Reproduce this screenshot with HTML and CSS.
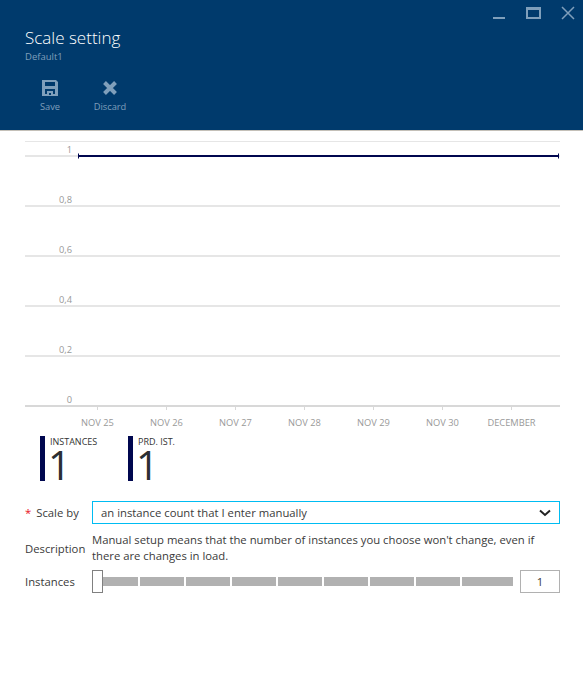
FILE: index.html
```html
<!DOCTYPE html>
<html lang="en">
<head>
    <meta charset="UTF-8">
    <meta name="viewport" content="width=device-width, initial-scale=1.0">
    <title>Scale setting</title>
    <link rel="stylesheet" href="styles.css">
</head>
<body>
    <header class="blade-header">
        <div class="window-buttons">
            <svg width="14" height="14" viewBox="0 0 14 14"><rect x="1" y="11" width="12" height="2" fill="#7f9fbb"/></svg>
            <svg width="17" height="14" viewBox="0 0 17 14"><path d="M1 1h15v12H1z M3 4v7h11V4z" fill="#7f9fbb" fill-rule="evenodd"/></svg>
            <svg width="14" height="14" viewBox="0 0 14 14"><path d="M1 1l12 12M13 1L1 13" stroke="#7f9fbb" stroke-width="1.5" fill="none"/></svg>
        </div>
        <h1>Scale setting</h1>
        <div class="subtitle">Default1</div>
        <div class="commands">
            <div class="command">
                <svg width="18" height="18" viewBox="0 0 18 18"><path d="M1 1h14l2 2v14H1z M4 3v4h10V3z M4 10v5h2v-3h6v3h2v-5z M8 14h2v2H8z" fill="#7f9fbb" fill-rule="evenodd"/></svg>
                <span>Save</span>
            </div>
            <div class="command">
                <svg width="18" height="18" viewBox="0 0 18 18"><path d="M3.5 3.5l11 11M14.5 3.5l-11 11" stroke="#7f9fbb" stroke-width="4" fill="none"/></svg>
                <span>Discard</span>
            </div>
        </div>
    </header>

    <svg class="chart" width="583" height="300" viewBox="0 131 583 300">
        <g stroke="#e6e6e6" stroke-width="2">
            <line x1="25" y1="141.5" x2="560" y2="141.5" stroke-width="1"/>
            <line x1="25" y1="156" x2="560" y2="156"/>
            <line x1="25" y1="206" x2="560" y2="206"/>
            <line x1="25" y1="256" x2="560" y2="256"/>
            <line x1="25" y1="306" x2="560" y2="306"/>
            <line x1="25" y1="356" x2="560" y2="356"/>
            <line x1="25" y1="406" x2="560" y2="406" stroke="#d8d8d8"/>
        </g>
        <g stroke="#d8d8d8">
            <line x1="97.5" y1="406" x2="97.5" y2="410"/>
            <line x1="166.5" y1="406" x2="166.5" y2="410"/>
            <line x1="235.5" y1="406" x2="235.5" y2="410"/>
            <line x1="304.5" y1="406" x2="304.5" y2="410"/>
            <line x1="373.5" y1="406" x2="373.5" y2="410"/>
            <line x1="442.5" y1="406" x2="442.5" y2="410"/>
            <line x1="511.5" y1="406" x2="511.5" y2="410"/>
        </g>
        <g class="axis-y" text-anchor="end">
            <text x="72" y="153">1</text>
            <text x="72" y="203">0,8</text>
            <text x="72" y="253">0,6</text>
            <text x="72" y="303">0,4</text>
            <text x="72" y="353">0,2</text>
            <text x="72" y="403">0</text>
        </g>
        <g class="axis-x" text-anchor="middle">
            <text x="97.5" y="426">NOV 25</text>
            <text x="166.5" y="426">NOV 26</text>
            <text x="235.5" y="426">NOV 27</text>
            <text x="304.5" y="426">NOV 28</text>
            <text x="373.5" y="426">NOV 29</text>
            <text x="442.5" y="426">NOV 30</text>
            <text x="511.5" y="426">DECEMBER</text>
        </g>
        <path d="M78.5 153.5v5M558.5 153.5v5" stroke="#00074f"/>
        <line x1="78" y1="156" x2="559" y2="156" stroke="#00074f" stroke-width="2"/>
    </svg>

    <div class="stats">
        <div class="stat">
            <div class="stat-label">INSTANCES</div>
            <div class="stat-value">1</div>
        </div>
        <div class="stat">
            <div class="stat-label">PRD. IST.</div>
            <div class="stat-value">1</div>
        </div>
    </div>

    <div class="form">
        <div class="form-row row-scale">
            <div class="form-label"><span class="required">*</span>Scale by</div>
            <div class="select">
                <span>an instance count that I enter manually</span>
                <svg width="12" height="8" viewBox="0 0 12 8"><path d="M1 1.5l5 4.5 5-4.5" stroke="#222" stroke-width="2" fill="none"/></svg>
            </div>
        </div>
        <div class="form-row row-description">
            <div class="form-label">Description</div>
            <p>Manual setup means that the number of instances you choose won't change, even if there are changes in load.</p>
        </div>
        <div class="form-row row-instances">
            <div class="form-label">Instances</div>
            <div class="slider">
                <div class="slider-thumb"></div>
                <div class="segment first"></div>
                <div class="segment"></div>
                <div class="segment"></div>
                <div class="segment"></div>
                <div class="segment"></div>
                <div class="segment"></div>
                <div class="segment"></div>
                <div class="segment"></div>
                <div class="segment last"></div>
            </div>
            <div class="number-box">1</div>
        </div>
    </div>
</body>
</html>
```

FILE: styles.css
```css
/* General Page Styling */
body {
    font-family: 'Open Sans', 'Noto Sans', sans-serif;
    margin: 0;
    padding: 0;
    background: #ffffff;
    color: #3a3a3a;
}

/* Header */
.blade-header {
    background: #003a6c;
    height: 130px;
    border-bottom: 1px solid #c4c0b8;
    padding: 0 0 0 25px;
    color: #ffffff;
    overflow: hidden;
}

.window-buttons {
    display: flex;
    justify-content: flex-end;
    gap: 19px;
    padding: 6px 8px 0 0;
    height: 20px;
}

h1 {
    font-size: 17px;
    font-weight: 300;
    line-height: 24px;
    margin: 0;
}

.subtitle {
    font-size: 9.5px;
    line-height: 14px;
    color: #7f9fbb;
}

.commands {
    display: flex;
    margin-top: 15px;
}

.command {
    width: 50px;
    display: flex;
    flex-direction: column;
    align-items: center;
    font-size: 9.3px;
    color: #7f9fbb;
    margin-right: 10px;
}

.command span {
    line-height: 14px;
    margin-top: 3px;
}

/* Chart */
.chart {
    display: block;
}

.chart text {
    font-family: 'Open Sans', 'Noto Sans', sans-serif;
    font-size: 9.3px;
    fill: #999999;
}

/* Stats */
.stats {
    display: flex;
    padding: 5px 0 0 40px;
}

.stat {
    width: 78px;
    height: 45px;
    border-left: 5px solid #00074f;
    padding-left: 5px;
}

.stat-label {
    font-size: 9px;
    line-height: 12px;
    color: #333333;
}

.stat-value {
    font-size: 40px;
    font-weight: 500;
    line-height: 33px;
    margin-left: -2px;
    color: #2b2f33;
}

/* Form */
.form {
    padding: 20px 23px 0 25px;
    font-size: 11.3px;
}

.form-row {
    display: flex;
}

.form-label {
    width: 67px;
    flex: none;
    white-space: nowrap;
}

.required {
    color: #e81123;
    margin-right: 5px;
}

.row-scale {
    height: 23px;
    align-items: center;
}

.select {
    flex: 1;
    height: 23px;
    box-sizing: border-box;
    border: 1px solid #00bcf2;
    padding: 0 8px;
    display: flex;
    align-items: center;
    justify-content: space-between;
}

.row-description {
    margin-top: 8px;
    align-items: center;
}

.row-description p {
    margin: 0;
    line-height: 16px;
}

.row-instances {
    margin-top: 6px;
    align-items: center;
}

.slider {
    position: relative;
    width: 421px;
    height: 9px;
    display: flex;
    gap: 2px;
}

.segment {
    flex: none;
    width: 44px;
    height: 9px;
    background: #b1b1b1;
}

.segment.first {
    width: 46px;
}

.segment.last {
    width: 51px;
}

.slider-thumb {
    position: absolute;
    left: 0;
    top: -7px;
    width: 11px;
    height: 23px;
    box-sizing: border-box;
    border: 1px solid #808080;
    background: #ffffff;
}

.number-box {
    width: 40px;
    height: 23px;
    box-sizing: border-box;
    margin-left: 7px;
    border: 1px solid #b1b1b1;
    text-align: center;
    line-height: 21px;
}
```
